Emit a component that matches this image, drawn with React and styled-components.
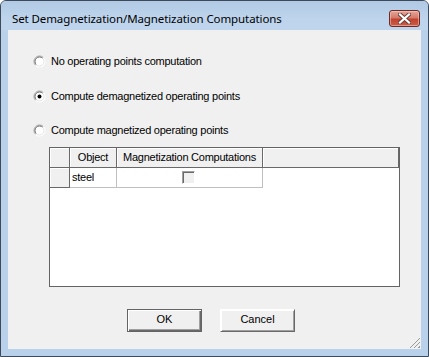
import React from 'react'
import styled, { createGlobalStyle } from 'styled-components'

const GlobalStyle = createGlobalStyle`
    html, body {
        margin: 0;
        padding: 0;
        background: #ffffff;
    }
    body {
        font-family: "Liberation Sans", Arial, sans-serif;
    }
`

const options = [
    { id: 'none', label: 'No operating points computation', checked: false },
    { id: 'demag', label: 'Compute demagnetized operating points', checked: true },
    { id: 'mag', label: 'Compute magnetized operating points', checked: false },
]

const RadioIcon = ({ checked }) => (
    <svg width="13" height="13" viewBox="0 0 13 13">
        <circle cx="6.5" cy="6.5" r="5.5" fill="#ffffff" />
        <path d="M2.6 10.4 A5.5 5.5 0 0 1 10.4 2.6" fill="none" stroke="#a0a0a0" strokeWidth="1" />
        <path d="M3.3 9.7 A4.5 4.5 0 0 1 9.7 3.3" fill="none" stroke="#696969" strokeWidth="1" />
        <path d="M10.4 2.6 A5.5 5.5 0 0 1 2.6 10.4" fill="none" stroke="#ffffff" strokeWidth="1" />
        <path d="M9.7 3.3 A4.5 4.5 0 0 1 3.3 9.7" fill="none" stroke="#e3e3e3" strokeWidth="1" />
        {checked && <circle cx="6.5" cy="6.5" r="2" fill="#000000" />}
    </svg>
)

const CloseGlyph = () => (
    <svg width="13" height="11" viewBox="0 0 13 11">
        <path
            d="M2 1.5 L11 9.5 M11 1.5 L2 9.5"
            stroke="#6b3b36"
            strokeWidth="4"
            strokeLinecap="square"
        />
        <path
            d="M2 1.5 L11 9.5 M11 1.5 L2 9.5"
            stroke="#ffffff"
            strokeWidth="2.2"
            strokeLinecap="square"
        />
    </svg>
)

const App = () => {
    return (
        <>
            <GlobalStyle />
            <Window>
                <TitleBar>
                    <TitleText>Set Demagnetization/Magnetization Computations</TitleText>
                    <CloseButton>
                        <CloseGlyph />
                    </CloseButton>
                </TitleBar>

                <Client>
                    <RadioList>
                        {options.map((o) => (
                            <RadioRow key={o.id}>
                                <RadioIcon checked={o.checked} />
                                <RadioLabel>{o.label}</RadioLabel>
                            </RadioRow>
                        ))}
                    </RadioList>

                    <Grid>
                        <GridRow>
                            <HeaderCell width={20} />
                            <HeaderCell width={47}>Object</HeaderCell>
                            <HeaderCell width={146}>Magnetization Computations</HeaderCell>
                            <HeaderCell grow />
                        </GridRow>
                        <GridRow>
                            <HeaderCell width={20} />
                            <DataCell width={47}>steel</DataCell>
                            <DataCell width={146} center>
                                <CheckBox />
                            </DataCell>
                        </GridRow>
                    </Grid>

                    <ButtonRow>
                        <DialogButton primary>OK</DialogButton>
                        <DialogButton>Cancel</DialogButton>
                    </ButtonRow>

                    <Grip />
                </Client>
            </Window>
        </>
    )
}

export default App

const Window = styled.div`
    width: 429px;
    height: 357px;
    box-sizing: border-box;
    border: 1px solid #3d4a5a;
    border-radius: 6px 6px 0 0;
    background: #b9d1ea;
    display: flex;
    flex-direction: column;
    overflow: hidden;
`

const TitleBar = styled.div`
    height: 29px;
    flex: none;
    display: flex;
    align-items: flex-start;
    justify-content: space-between;
    padding: 0 8px 0 11px;
    background: linear-gradient(180deg, #b1c9e4 0%, #bed4ec 60%, #bfd5ed 100%);
`

const TitleText = styled.span`
    font-family: "Segoe UI", "Noto Sans", sans-serif;
    font-size: 11.5px;
    line-height: 16px;
    padding-top: 10px;
    color: #000000;
    letter-spacing: -0.1px;
`

const CloseButton = styled.div`
    width: 31px;
    height: 17px;
    margin-top: 9px;
    box-sizing: border-box;
    border: 1px solid #6e2b26;
    border-radius: 3px;
    background: linear-gradient(180deg, #e4a79a 0%, #d47a69 45%, #c2432f 55%, #c95d48 100%);
    box-shadow: inset 0 0 0 1px rgba(255, 210, 200, 0.5);
    display: flex;
    align-items: center;
    justify-content: center;
`

const Client = styled.div`
    position: relative;
    flex: none;
    height: 319px;
    margin: 0 7px;
    background: #f0f0f0;
    padding-top: 25px;
    box-sizing: border-box;
`

const RadioList = styled.div`
    display: flex;
    flex-direction: column;
    gap: 21.5px;
    padding-left: 25px;
`

const RadioRow = styled.label`
    display: flex;
    align-items: center;
    gap: 5px;
    height: 13px;
`

const RadioLabel = styled.span`
    font-size: 11px;
    line-height: 13px;
    letter-spacing: -0.25px;
    color: #000000;
`

const Grid = styled.div`
    margin: 10px 0 0 41px;
    width: 351px;
    height: 140px;
    box-sizing: border-box;
    border: 1px solid #646464;
    background: #ffffff;
`

const GridRow = styled.div`
    display: flex;
    height: 20px;
`

const HeaderCell = styled.div`
    flex: ${(p) => (p.grow ? '1' : 'none')};
    width: ${(p) => (p.width ? `${p.width}px` : 'auto')};
    box-sizing: border-box;
    background: #f0f0f0;
    border-right: 1px solid #696969;
    border-bottom: 1px solid #696969;
    box-shadow: inset 1px 1px 0 #ffffff;
    font-size: 11px;
    line-height: 19px;
    letter-spacing: -0.25px;
    text-align: center;
    white-space: nowrap;
    overflow: hidden;
`

const DataCell = styled.div`
    flex: none;
    width: ${(p) => p.width}px;
    box-sizing: border-box;
    border-right: 1px solid #c0c0c0;
    border-bottom: 1px solid #c0c0c0;
    font-size: 11px;
    line-height: 19px;
    letter-spacing: -0.25px;
    padding-left: 2px;
    display: flex;
    align-items: center;
    justify-content: ${(p) => (p.center ? 'center' : 'flex-start')};
`

const CheckBox = styled.span`
    width: 13px;
    height: 13px;
    box-sizing: border-box;
    background: #f0f0f0;
    border-top: 1px solid #a0a0a0;
    border-left: 1px solid #a0a0a0;
    border-right: 1px solid #ffffff;
    border-bottom: 1px solid #ffffff;
    box-shadow: inset 1px 1px 0 #696969;
    margin-right: 4px;
`

const ButtonRow = styled.div`
    display: flex;
    gap: 18px;
    padding-left: 119px;
    margin-top: 22px;
`

const DialogButton = styled.div`
    width: 75px;
    height: 23px;
    box-sizing: border-box;
    background: #f0f0f0;
    font-size: 11px;
    line-height: 19px;
    text-align: center;
    color: #000000;
    border: 1px solid ${(p) => (p.primary ? '#646464' : '#f0f0f0')};
    box-shadow: ${(p) =>
        p.primary
            ? 'inset 1px 1px 0 #ffffff, inset -1px -1px 0 #696969, inset -2px -2px 0 #a0a0a0'
            : 'inset 1px 1px 0 #ffffff, inset -1px -1px 0 #a0a0a0'};
    ${(p) =>
        !p.primary &&
        `border-color: #ffffff #696969 #696969 #ffffff;`}
`

const Grip = styled.div`
    position: absolute;
    right: 1px;
    bottom: 1px;
    width: 11px;
    height: 11px;
    background: repeating-linear-gradient(
        135deg,
        transparent 0px,
        transparent 2px,
        #9a9a9a 2px,
        #9a9a9a 3px
    );
    clip-path: polygon(100% 0, 100% 100%, 0 100%);
`
